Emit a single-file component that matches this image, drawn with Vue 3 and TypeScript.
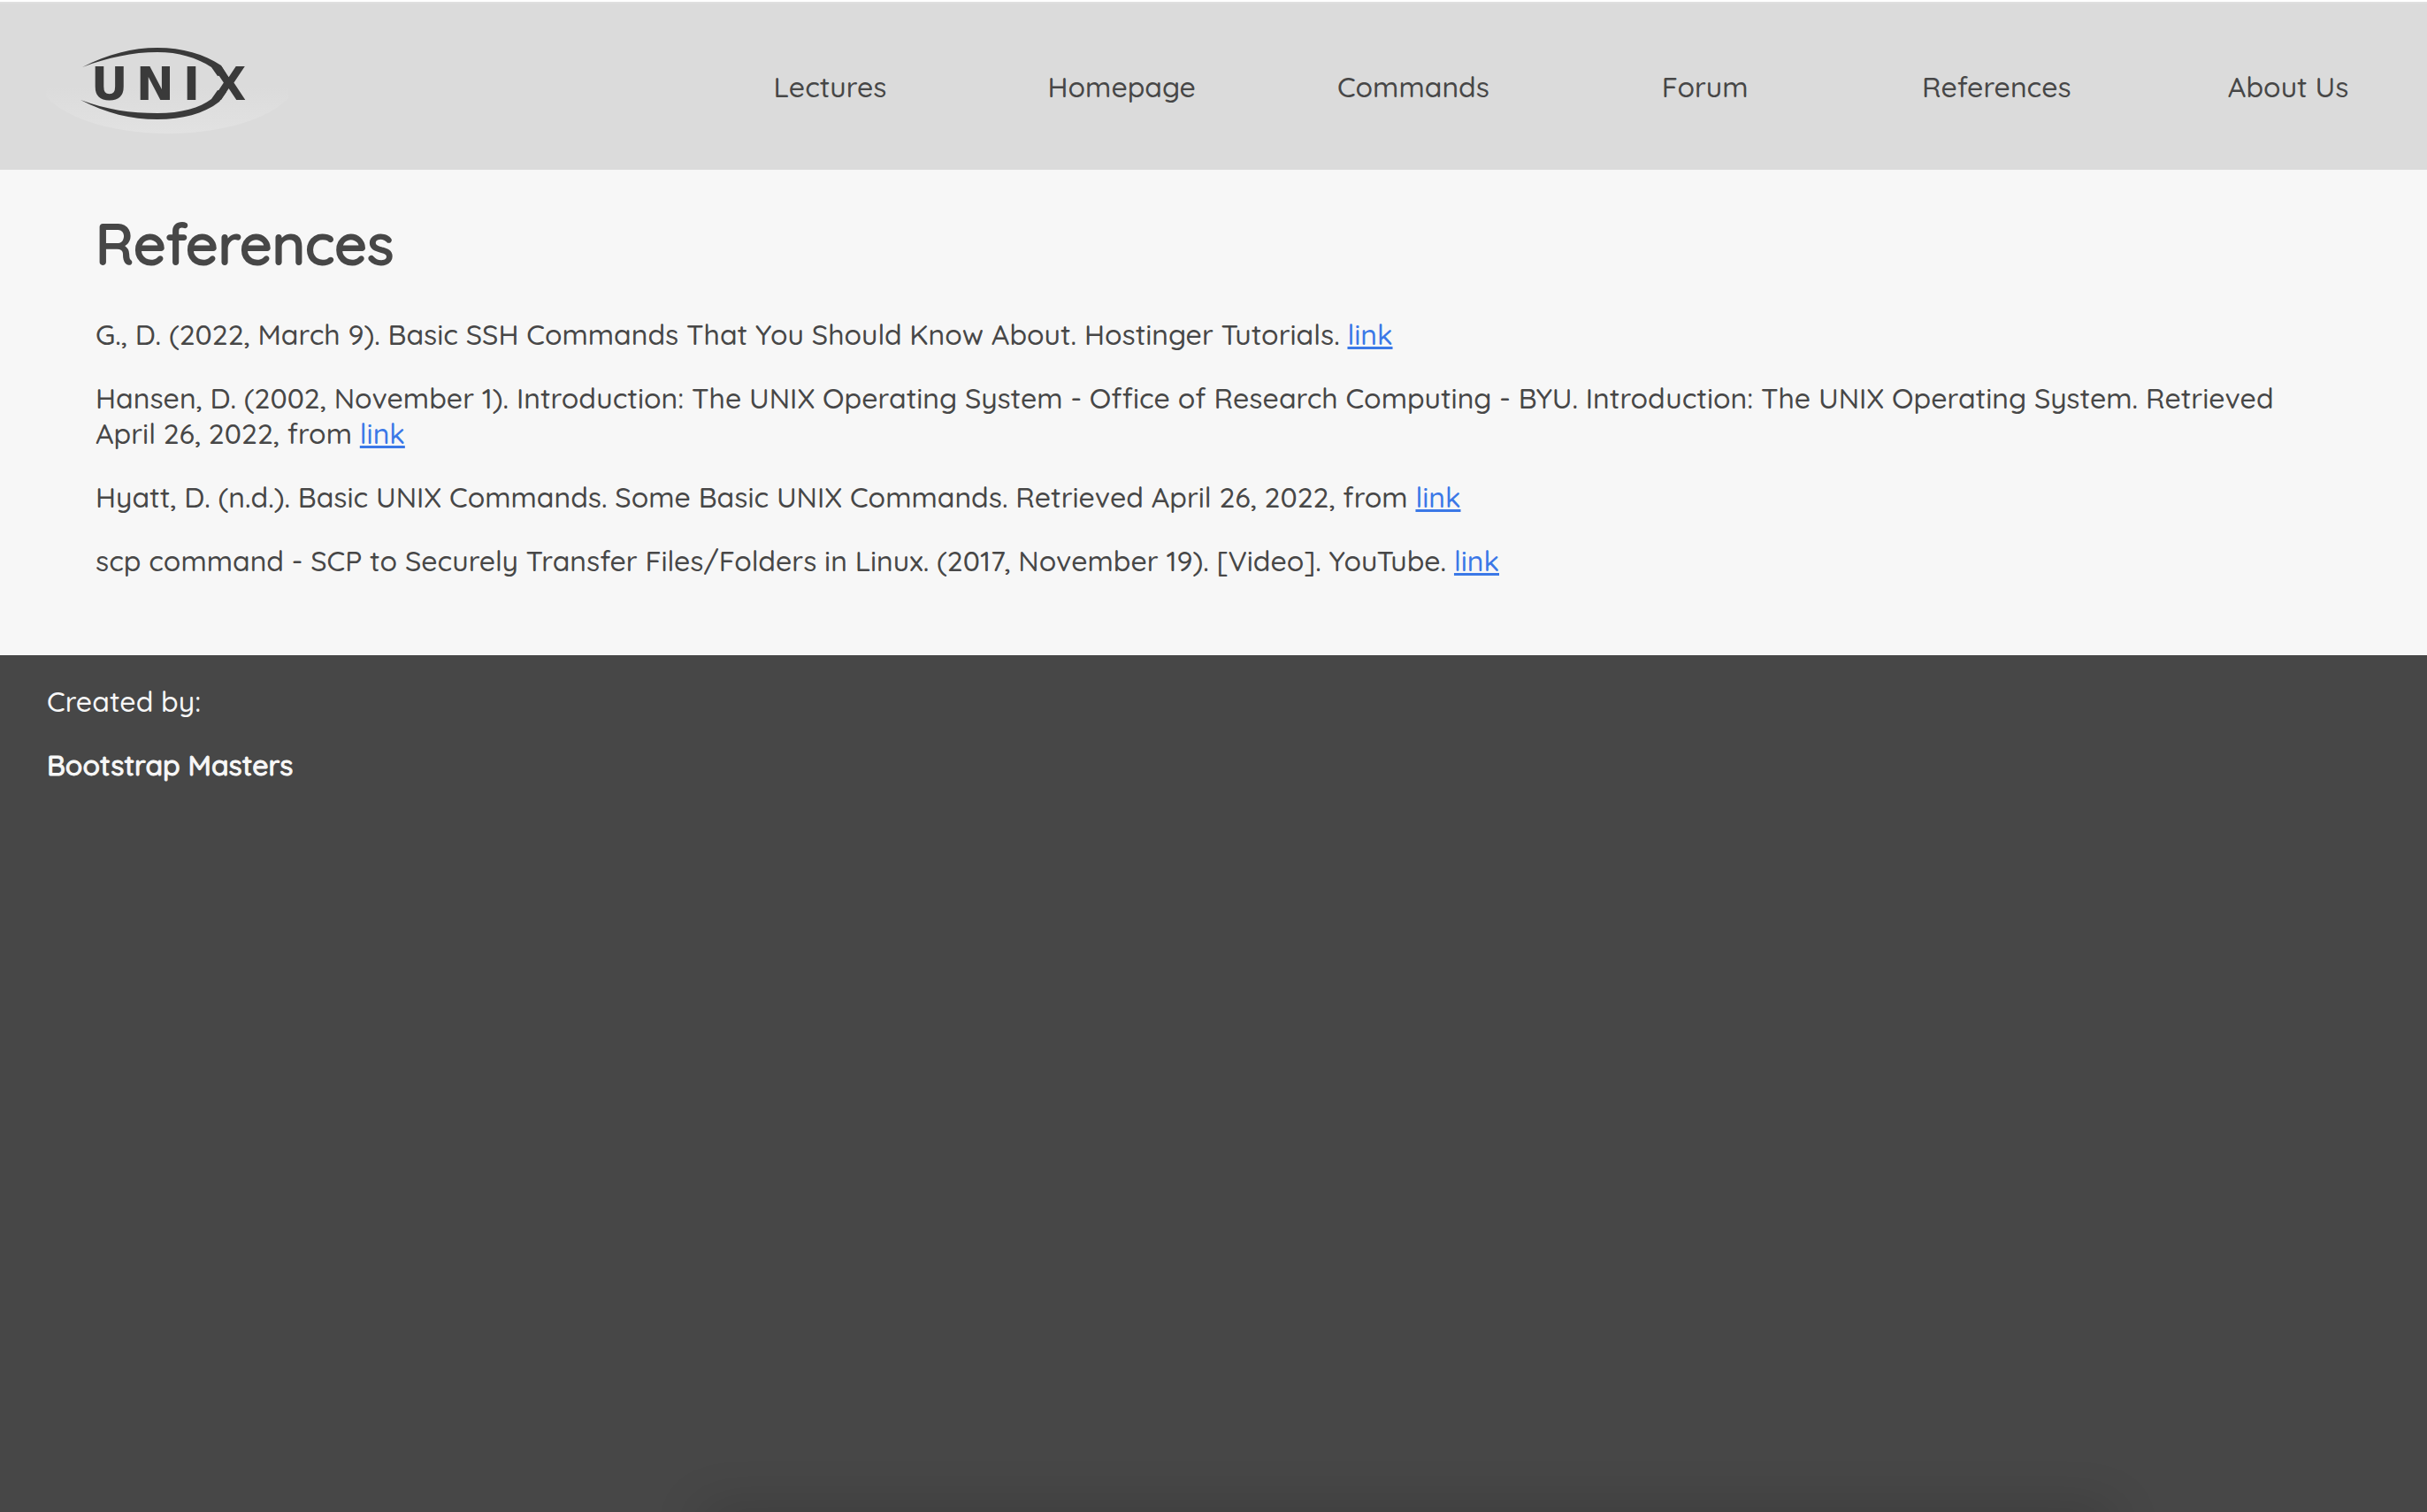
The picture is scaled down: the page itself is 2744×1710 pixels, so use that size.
<script setup lang="ts">
interface Reference {
  text: string
  href: string
}

const navItems: string[] = ['Lectures', 'Homepage', 'Commands', 'Forum', 'References', 'About Us']

const references: Reference[] = [
  {
    text: 'G., D. (2022, March 9). Basic SSH Commands That You Should Know About. Hostinger Tutorials.',
    href: '#ssh-commands',
  },
  {
    text: 'Hansen, D. (2002, November 1). Introduction: The UNIX Operating System - Office of Research Computing - BYU. Introduction: The UNIX Operating System. Retrieved April 26, 2022, from',
    href: '#unix-introduction',
  },
  {
    text: 'Hyatt, D. (n.d.). Basic UNIX Commands. Some Basic UNIX Commands. Retrieved April 26, 2022, from',
    href: '#basic-commands',
  },
  {
    text: 'scp command - SCP to Securely Transfer Files/Folders in Linux. (2017, November 19). [Video]. YouTube.',
    href: '#scp-command',
  },
]
</script>

<template>
  <div class="page">
    <header class="header">
      <a class="brand" href="#home" aria-label="UNIX">
        <svg class="logo" width="274" height="102" viewBox="52 50 274 102">
          <defs>
            <linearGradient id="glow" x1="0" y1="0" x2="0" y2="1">
              <stop offset="0.6" stop-color="#e2e2e2" stop-opacity="0" />
              <stop offset="1" stop-color="#e2e2e2" />
            </linearGradient>
          </defs>
          <ellipse cx="190" cy="85" rx="148" ry="66" fill="url(#glow)" />
          <g fill="#3a3a3a">
            <path d="M93 76 C122 61 150 54 178 54 C206 54 231 61 250 74 L256 84 L246 86 L239 76 C222 65 202 59 178 59 C150 59 122 65 93 76 Z" />
            <path d="M91 113 C120 124 148 128 178 128 C205 128 226 122 239 112 L246 102 L256 104 L248 115 C230 129 206 135 178 135 C148 135 120 128 91 113 Z" />
            <text class="logo-text" y="113" x="103 154 207 239">UNIX</text>
          </g>
        </svg>
      </a>
      <nav class="nav">
        <a v-for="item in navItems" :key="item" class="nav-link" href="#">{{ item }}</a>
      </nav>
    </header>

    <main class="content">
      <h1 class="title">References</h1>
      <p v-for="entry in references" :key="entry.href" class="entry">
        {{ entry.text }} <a class="entry-link" :href="entry.href">link</a>
      </p>
    </main>

    <footer class="footer">
      <p class="credit">Created by:</p>
      <p class="credit team">Bootstrap Masters</p>
    </footer>
  </div>
</template>

<style>
body {
  margin: 0;
  background: #474747;
}
</style>

<style scoped>
.page {
  position: relative;
  display: flex;
  flex-direction: column;
  box-sizing: border-box;
  min-height: 100vh;
  border-top: 2px solid #ffffff;
  overflow: hidden;
  font-family: Quicksand, Lato, sans-serif;
  font-size: 32px;
  font-weight: 500;
  line-height: 40px;
  color: #474747;
}

/* soft shade rising from the bottom edge */
.page::after {
  content: '';
  position: absolute;
  top: 100%;
  left: 29%;
  right: 13%;
  height: 40px;
  box-shadow: 0 0 60px rgba(0, 0, 0, 0.2);
}

.header {
  display: flex;
  align-items: center;
  box-sizing: border-box;
  min-height: 190px;
  border-top: 2px solid #dfdfdf;
  background: #dbdbdb;
}

.brand {
  flex: 1;
  padding: 6px 0 0 52px;
}

.logo {
  display: block;
}

.logo-text {
  font-family: 'DejaVu Sans', sans-serif;
  font-size: 51px;
  font-weight: 700;
}

.nav {
  display: flex;
  width: 72.1%;
  margin-right: -8px;
}

.nav-link {
  flex: 1;
  color: inherit;
  text-align: center;
  text-decoration: none;
}

.content {
  padding: 43px 108px 55px;
  background: #f7f7f7;
}

.title {
  margin: 0 0 43px;
  font-size: 64px;
  font-weight: 500;
  line-height: 80px;
  -webkit-text-stroke: 2px currentColor;
}

.entry {
  margin: 0 0 32px;
}

.entry-link {
  color: #3b78e7;
  text-decoration-thickness: 3px;
}

.footer {
  flex: 1;
  padding: 32px 53px;
  background: #474747;
  color: #f7f7f7;
}

.credit {
  margin: 0 0 32px;
}

.team {
  -webkit-text-stroke: 1px currentColor;
}
</style>
